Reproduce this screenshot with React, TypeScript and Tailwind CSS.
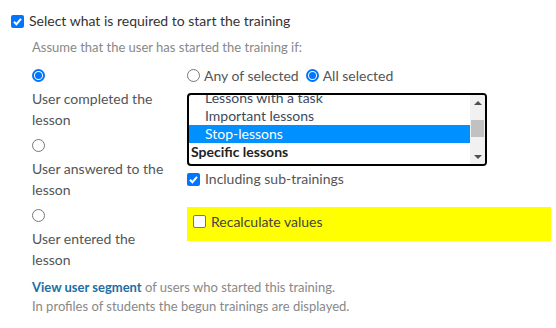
import React from 'react';

const Radio = ({ checked }: { checked?: boolean }) => (
    <span
        className={`inline-flex items-center justify-center w-[13px] h-[13px] rounded-full border shrink-0 bg-white ${
            checked ? 'border-[#0075ff] border-2' : 'border-[#767676]'
        }`}
    >
        {checked && <span className="w-[7px] h-[7px] rounded-full bg-[#0075ff]" />}
    </span>
);

const Checkbox = ({ checked }: { checked?: boolean }) =>
    checked ? (
        <span className="inline-flex items-center justify-center w-[13px] h-[13px] rounded-[2px] bg-[#0075ff] shrink-0">
            <svg width="11" height="11" viewBox="0 0 11 11">
                <path d="M2 5.8 L4.4 8.2 L9 2.8" fill="none" stroke="white" strokeWidth="2" />
            </svg>
        </span>
    ) : (
        <span className="inline-block w-[13px] h-[13px] rounded-[2px] border border-[#767676] bg-white shrink-0" />
    );

const conditions = ['User completed the lesson', 'User answered to the lesson', 'User entered the lesson'];

export default function App() {
    return (
        <div className="w-[556px] h-[328px] bg-white text-[14px] text-[#333] font-['Lato','Liberation_Sans',sans-serif] overflow-hidden">
            {/* Header */}
            <div className="flex items-center gap-[5px] pl-[11px] pt-[10px] h-[32px]">
                <Checkbox checked />
                <span className="leading-[20px]">Select what is required to start the training</span>
            </div>
            <div className="pl-[32px] mt-[5px] text-[13px] text-[#888] leading-[20px]">Assume that the user has started the training if:</div>

            <div className="flex pl-[32px] mt-[11px]">
                {/* Left: conditions */}
                <div className="w-[155px] flex flex-col gap-[8px]">
                    {conditions.map((c, i) => (
                        <div key={c}>
                            <div className="h-[14px] flex items-center">
                                <Radio checked={i === 0} />
                            </div>
                            <div className="text-[#555] leading-[21px] mt-[6px] pr-[10px]">{c}</div>
                        </div>
                    ))}
                </div>

                {/* Right: options */}
                <div className="flex flex-col">
                    <div className="flex items-center h-[14px] text-[#555]">
                        <Radio />
                        <span className="ml-[4px] mr-[7px]">Any of selected</span>
                        <Radio checked />
                        <span className="ml-[4px]">All selected</span>
                    </div>

                    {/* Listbox */}
                    <div className="mt-[11px] w-[300px] h-[73px] border-2 border-black rounded-[4px] flex overflow-hidden">
                        <div className="flex-1 overflow-hidden">
                            <div className="-mt-[6px] leading-[18px] text-[#3d4a5c]">
                                <div className="pl-[16px]">Lessons with a task</div>
                                <div className="pl-[16px]">Important lessons</div>
                                <div className="pl-[16px] bg-[#0090ff] text-white">Stop-lessons</div>
                                <div className="pl-[2px] font-bold text-[#222]">Specific lessons</div>
                            </div>
                        </div>
                        <div className="w-[15px] bg-[#f1f1f1] flex flex-col items-center pt-[6px] pb-[5px]">
                            <span className="w-0 h-0 border-x-[4px] border-x-transparent border-b-[4px] border-b-[#505050]" />
                            <span className="w-[13px] h-[17px] bg-[#c1c1c1] mt-[15px]" />
                            <span className="flex-1" />
                            <span className="w-0 h-0 border-x-[4px] border-x-transparent border-t-[4px] border-t-[#505050]" />
                        </div>
                    </div>

                    <div className="flex items-center gap-[5px] mt-[4px] text-[#555] leading-[18px]">
                        <Checkbox checked />
                        <span>Including sub-trainings</span>
                    </div>

                    <div className="mt-[19px] w-[364px] h-[34px] bg-[#ffff00] flex items-center gap-[5px] pl-[6px] pb-[6px] text-[#444]">
                        <Checkbox />
                        <span>Recalculate values</span>
                    </div>
                </div>
            </div>

            {/* Footer */}
            <div className="pl-[32px] mt-[8px] text-[13px] text-[#888] leading-[19px]">
                <div>
                    <span className="font-bold text-[#1c6ea4]">View user segment</span> of users who started this training.
                </div>
                <div>In profiles of students the begun trainings are displayed.</div>
            </div>
        </div>
    );
}
